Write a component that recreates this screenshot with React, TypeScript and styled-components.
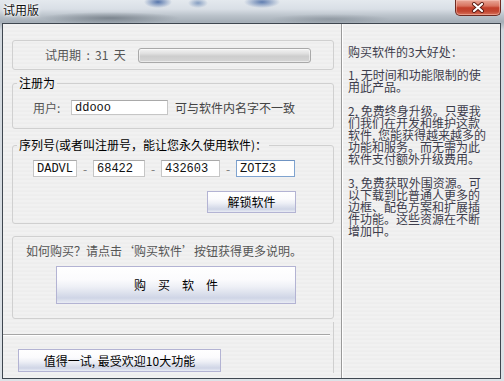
import React from "react";
import styled, { createGlobalStyle } from "styled-components";

const cjk = `"Noto Sans CJK SC", "Noto Sans", sans-serif`;
const mono = `"Liberation Mono", "DejaVu Sans Mono", monospace`;

const GlobalStyle = createGlobalStyle`
  html, body { margin: 0; padding: 0; }
  body {
    width: 504px;
    height: 381px;
    overflow: hidden;
    font-family: ${cjk};
    font-size: 12px;
  }
`;

const Window = styled.div`
  width: 504px;
  height: 381px;
  box-sizing: border-box;
  display: flex;
  flex-direction: column;
  background:
    radial-gradient(ellipse 14px 6px at 158px 2px, rgba(40, 80, 150, 0.75), transparent),
    radial-gradient(ellipse 10px 5px at 198px 3px, rgba(60, 100, 160, 0.55), transparent),
    radial-gradient(ellipse 18px 6px at 262px 2px, rgba(40, 80, 150, 0.7), transparent),
    radial-gradient(ellipse 70px 6px at 110px 18px, rgba(80, 90, 100, 0.55), transparent),
    radial-gradient(ellipse 60px 5px at 330px 19px, rgba(90, 100, 110, 0.35), transparent),
    linear-gradient(to bottom, #e4e9ee 0px, #d9dfe6 9px, #b9c1c9 16px, #a5aeb7 22px, #d3d9df 30px, #dde2e7 100%);
`;

const TitleBar = styled.div`
  height: 23px;
  flex: none;
  display: flex;
  align-items: flex-start;
  padding: 0 3px 0 3px;
  box-sizing: border-box;
`;

const Title = styled.div`
  margin-top: 4px;
  font: 12px/12px ${cjk};
  color: #111;
  text-shadow: 0 0 5px #fff, 0 0 3px #fff, 0 0 2px #fff;
`;

const CloseButton = styled.div`
  margin-left: auto;
  width: 46px;
  height: 16px;
  box-sizing: border-box;
  border: 1px solid #6e2b22;
  border-top: none;
  border-radius: 0 0 5px 5px;
  background: linear-gradient(to bottom, #e9a899 0%, #d8735f 40%, #c33f2a 52%, #c24631 75%, #d9735c 100%);
  box-shadow: inset 0 0 0 1px rgba(255, 210, 200, 0.45);
  display: flex;
  align-items: center;
  justify-content: center;
`;

const Client = styled.div`
  flex: 1;
  min-height: 0;
  margin: 0 3px 2px 2px;
  border: 1px solid #3f4750;
  background: repeating-linear-gradient(180deg, #f1f1f1 0px, #f1f1f1 2px, #ebebeb 3px, #efefef 4px);
  display: flex;
`;

const LeftPanel = styled.div`
  width: 331px;
  flex: none;
  box-sizing: border-box;
  padding: 16px 0 0 9px;
  display: flex;
  flex-direction: column;
`;

const RightPanel = styled.div`
  flex: 1;
  margin-left: 7px;
  border-left: 1px solid #9a9a9a;
  box-shadow: inset 1px 0 0 #ffffff;
  padding: 22px 0 0 6px;
  color: #3d3d4c;
`;

const Para = styled.p`
  margin: 0 0 11px;
  font: 12px/12.2px ${cjk};
  white-space: nowrap;
`;

const TrialBox = styled.div`
  height: 30px;
  box-sizing: border-box;
  border: 1px solid #d0d0d0;
  border-radius: 3px;
  display: flex;
  align-items: center;
  padding: 0 22px 0 32px;
  color: #555;
  font: 12px/14px ${cjk};
  white-space: pre;
`;

const Progress = styled.div`
  margin-left: auto;
  width: 173px;
  height: 15px;
  box-sizing: border-box;
  border: 1px solid #a9a9a9;
  border-radius: 3px;
  background: linear-gradient(to bottom, #f3f3f3 0%, #e0e0e0 35%, #cdcdcd 55%, #d6d6d6 100%);
  box-shadow: inset 0 0 0 1px rgba(255, 255, 255, 0.5);
`;

const Group = styled.fieldset<{ $top: number }>`
  margin: ${(p) => p.$top}px 0 0 0;
  padding: 0;
  border: 1px solid #d0d0d0;
  border-radius: 3px;
  min-width: 0;
`;

const Legend = styled.legend`
  margin-left: 4px;
  padding: 0 2px;
  font: 12px/14px ${cjk};
  color: #000;
`;

const GroupBody = styled.div<{ $pt: number; $pb: number }>`
  padding: ${(p) => p.$pt}px 37px ${(p) => p.$pb}px 20px;
  display: flex;
  flex-direction: column;
`;

const Row = styled.div`
  display: flex;
  align-items: center;
`;

const FieldLabel = styled.span`
  width: 38px;
  color: #555;
  font: 12px/14px ${cjk};
`;

const Hint = styled.span`
  margin-left: 7px;
  color: #444;
  font: 12px/14px ${cjk};
  white-space: nowrap;
`;

const TextBox = styled.div<{ $w: number; $h: number; $focus?: boolean }>`
  width: ${(p) => p.$w}px;
  height: ${(p) => p.$h}px;
  box-sizing: border-box;
  background: #fff;
  border: 1px solid ${(p) => (p.$focus ? "#7fa3cf" : "#c6c6c6")};
  border-top-color: ${(p) => (p.$focus ? "#6f93c2" : "#a9a9a9")};
  padding: 0 3px;
  display: flex;
  align-items: center;
  font: 12px/12px ${mono};
  color: #111;
  white-space: nowrap;
  overflow: hidden;
`;

const Dash = styled.span`
  width: 16px;
  text-align: center;
  color: #777;
  font: 12px/14px ${cjk};
`;

const ButtonRow = styled.div`
  margin-top: 14px;
  display: flex;
  justify-content: flex-end;
`;

const SkinButton = styled.div<{ $w: number; $h: number }>`
  width: ${(p) => p.$w}px;
  height: ${(p) => p.$h}px;
  box-sizing: border-box;
  border: 1px solid #b3b3d3;
  background: linear-gradient(
    to bottom,
    #ffffff 0%,
    #fbfbfd 35%,
    #eef0f6 55%,
    #d7dcea 78%,
    #cfd5e6 86%,
    #e9ecf4 100%
  );
  display: flex;
  align-items: center;
  justify-content: center;
  font: 12px/14px ${cjk};
  color: #000;
  white-space: pre;
`;

const BuyBox = styled.div`
  margin-top: 12px;
  height: 83px;
  box-sizing: border-box;
  border: 1px solid #d0d0d0;
  border-radius: 3px;
  padding-top: 7px;
  display: flex;
  flex-direction: column;
`;

const BuyText = styled.div`
  padding-left: 13px;
  color: #555;
  font: 12px/14px ${cjk};
  white-space: nowrap;
`;

const BuyButtonWrap = styled.div`
  margin: 8px 0 0 43px;
`;

const Footer = styled.div`
  flex: 1;
  margin: 3px 0 5px 0;
  border-right: 1px solid #cfcfcf;
  display: flex;
  flex-direction: column;
`;

const Rule = styled.div`
  margin: 12px 3px 0 -9px;
  height: 0;
  border-top: 1px solid #a6a6a6;
  border-bottom: 1px solid #ffffff;
`;

const FooterButtonWrap = styled.div`
  margin: 13px 0 0 6px;
`;

const benefits: string[][] = [
  ["购买软件的3大好处："],
  ["1, 无时间和功能限制的使", "用此产品。"],
  [
    "2, 免费终身升级。只要我",
    "们我们在开发和维护这款",
    "软件, 您能获得越来越多的",
    "功能和服务。而无需为此",
    "软件支付额外升级费用。",
  ],
  [
    "3, 免费获取外围资源。可",
    "以下载到比普通人更多的",
    "边框、配色方案和扩展插",
    "件功能。这些资源在不断",
    "增加中。",
  ],
];

export default function App() {
  return (
    <>
      <GlobalStyle />
      <Window>
        <TitleBar>
          <Title>试用版</Title>
          <CloseButton>
            <svg width="14" height="11" viewBox="0 0 14 11">
              <path d="M3 2 L11 9 M11 2 L3 9" stroke="#5a1a12" strokeWidth="4" strokeLinecap="round" />
              <path d="M3 2 L11 9 M11 2 L3 9" stroke="#ffffff" strokeWidth="2.2" strokeLinecap="round" />
            </svg>
          </CloseButton>
        </TitleBar>
        <Client>
          <LeftPanel>
            <TrialBox>
              <span>试用期  :  31  天</span>
              <Progress />
            </TrialBox>

            <Group $top={6}>
              <Legend>注册为</Legend>
              <GroupBody $pt={10} $pb={13}>
                <Row>
                  <FieldLabel>用户:</FieldLabel>
                  <TextBox $w={97} $h={15}>ddooo</TextBox>
                  <Hint>可与软件内名字不一致</Hint>
                </Row>
              </GroupBody>
            </Group>

            <Group $top={9}>
              <Legend>序列号(或者叫注册号，能让您永久使用软件)：</Legend>
              <GroupBody $pt={8} $pb={10}>
                <Row>
                  <TextBox $w={44} $h={17}>DADVL</TextBox>
                  <Dash>-</Dash>
                  <TextBox $w={52} $h={17}>68422</TextBox>
                  <Dash>-</Dash>
                  <TextBox $w={59} $h={17}>432603</TextBox>
                  <Dash>-</Dash>
                  <TextBox $w={59} $h={17} $focus>
                    ZOTZ3
                  </TextBox>
                </Row>
                <ButtonRow>
                  <SkinButton $w={89} $h={22}>
                    解锁软件
                  </SkinButton>
                </ButtonRow>
              </GroupBody>
            </Group>

            <BuyBox>
              <BuyText>如何购买？请点击‘购买软件’按钮获得更多说明。</BuyText>
              <BuyButtonWrap>
                <SkinButton $w={240} $h={38}>
                  购　买　软　件
                </SkinButton>
              </BuyButtonWrap>
            </BuyBox>

            <Footer>
              <Rule />
              <FooterButtonWrap>
                <SkinButton $w={203} $h={23}>
                  值得一试, 最受欢迎10大功能
                </SkinButton>
              </FooterButtonWrap>
            </Footer>
          </LeftPanel>

          <RightPanel>
            {benefits.map((lines, i) => (
              <Para key={i}>
                {lines.map((l, j) => (
                  <React.Fragment key={j}>
                    {j > 0 && <br />}
                    {l}
                  </React.Fragment>
                ))}
              </Para>
            ))}
          </RightPanel>
        </Client>
      </Window>
    </>
  );
}
